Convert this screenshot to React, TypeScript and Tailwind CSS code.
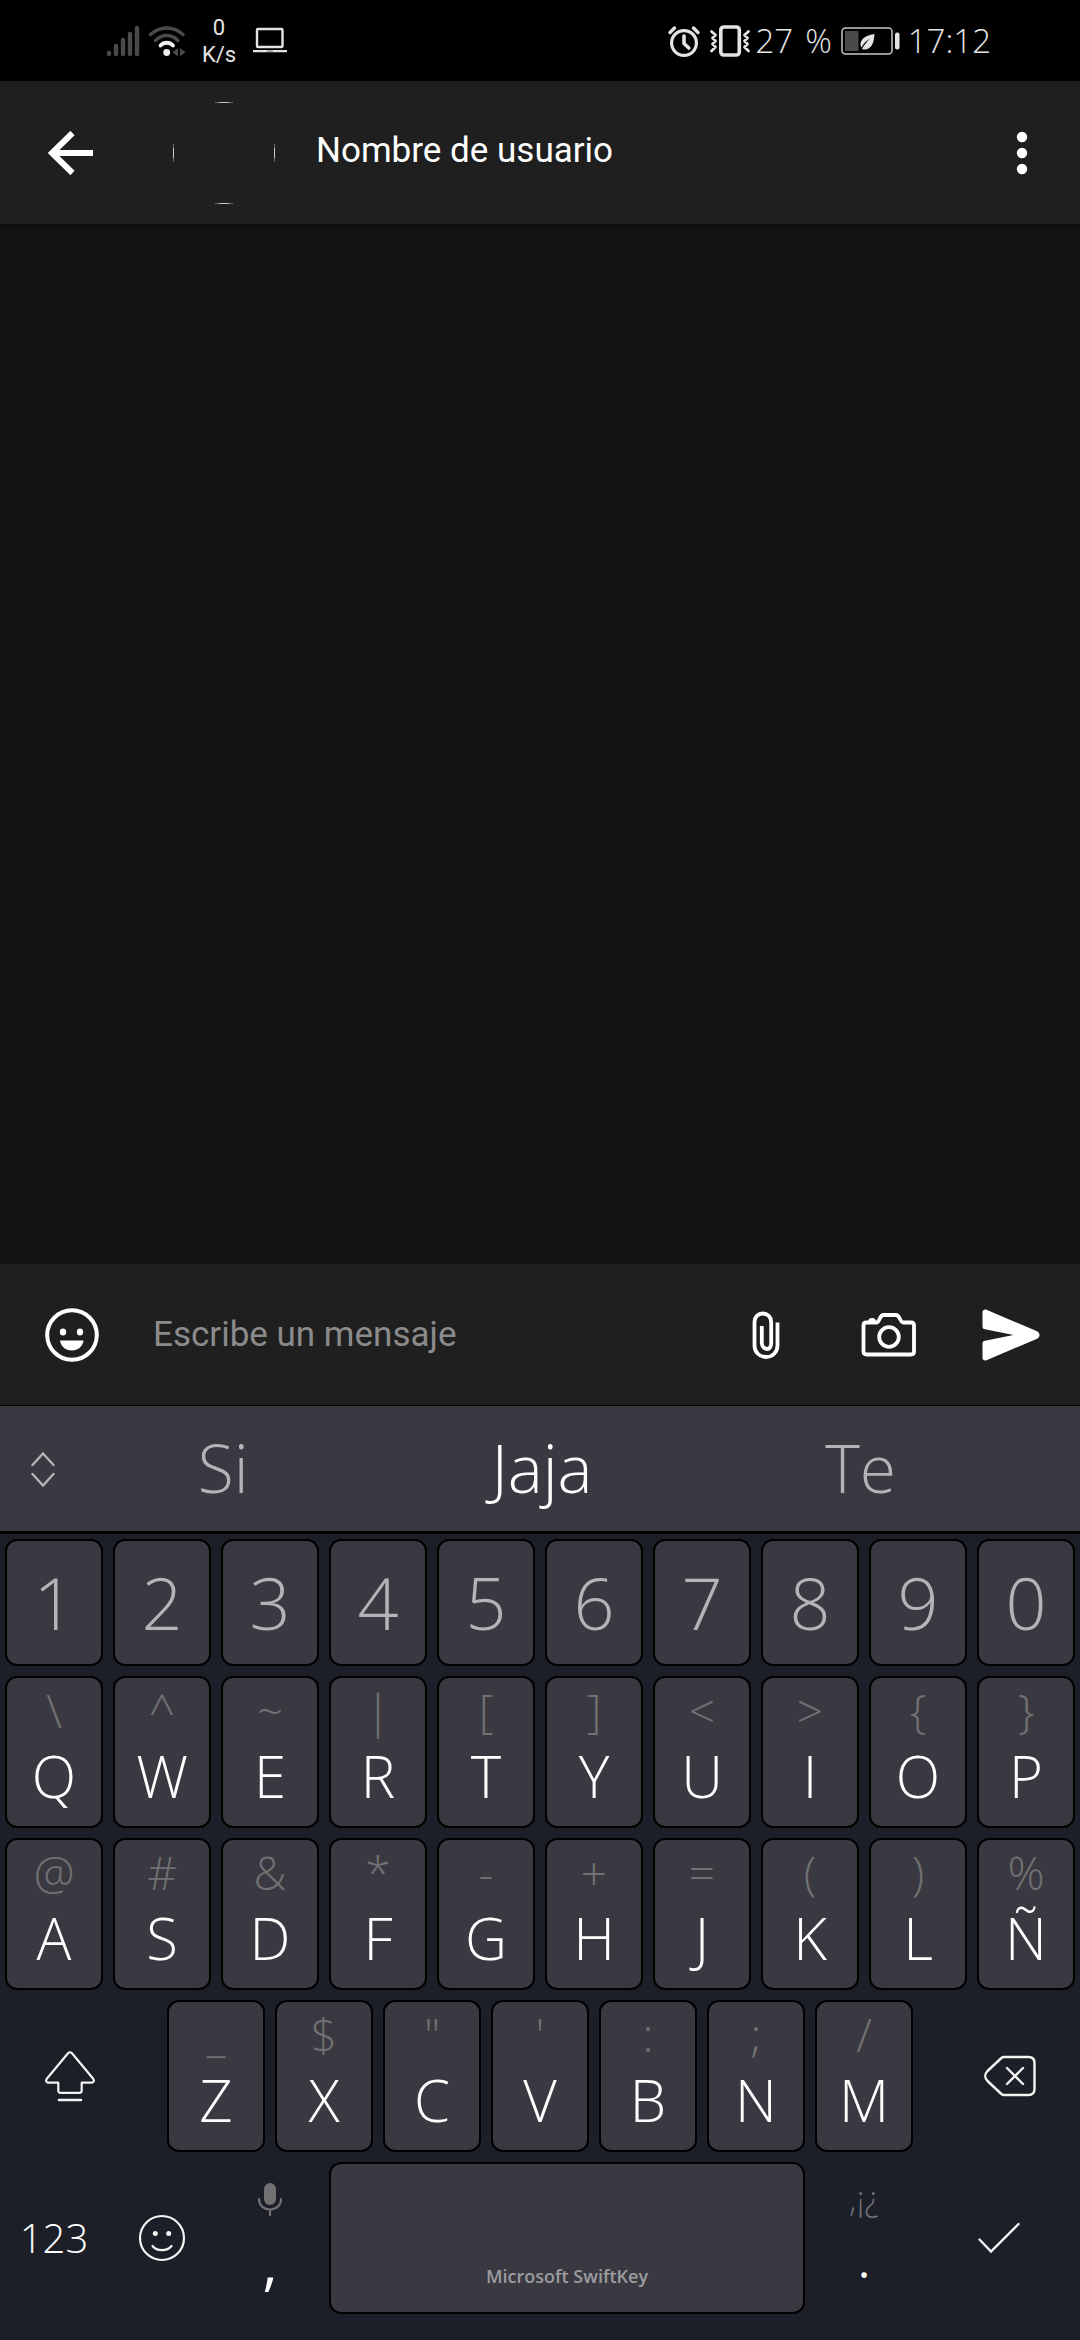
import React from "react";

type KeyDef = { main: string; hint: string };

const digits = ["1", "2", "3", "4", "5", "6", "7", "8", "9", "0"];

const zip = (letters: string, hints: string): KeyDef[] =>
  Array.from(letters).map((main, i) => ({ main, hint: Array.from(hints)[i] }));

const topRow = zip("QWERTYUIOP", "\\^~|[]<>{}");
const homeRow = zip("ASDFGHJKLÑ", "@#&*-+=()%");
const bottomRow = zip("ZXCVBNM", "_$\"':;/");

const capClass = "mx-[5px] rounded-xl border-2 border-black bg-[#3a3942]";

function LetterKey({ main, hint }: KeyDef) {
  return (
    <button className={`${capClass} col-span-2 flex h-[152px] flex-col items-center overflow-hidden pt-1`}>
      <span className="text-[46px] leading-[56px] text-[#717174]">{hint}</span>
      <span className="text-[58px] font-[350] leading-[76px] text-white">{main}</span>
    </button>
  );
}

function StatusBar() {
  return (
    <div className="flex h-[81px] items-center bg-black pl-[106px] pr-[89px] text-[#e4e4e4]">
      <svg className="h-8 w-[34px]" viewBox="0 0 34 32" stroke="#4a4a4a" strokeWidth="4.4" strokeLinecap="round">
        <path d="M3 28v1M10 21v8M17 15v14M24 9v20M31 3v26" />
      </svg>
      <svg className="ml-2 h-8 w-[38px]" viewBox="0 0 38 32" fill="none" strokeLinecap="round">
        <path d="M2.500 9.500C12 .8 25.500 .8 35 9.500" stroke="#4a4a4a" strokeWidth="3.400" />
        <path d="M7.500 15.500C14 8.800 23.500 8.800 30 15.500" stroke="#4a4a4a" strokeWidth="3.400" />
        <path d="M12.500 20.500C16 16.800 21.500 16.800 25 20.500" stroke="#efefef" strokeWidth="3.800" />
        <circle cx="18.700" cy="27.500" r="3.400" fill="#efefef" />
        <path d="M30 23v8.500L24.500 27.200zM32 23v8.500l5.500-4.300z" fill="#4a4a4a" />
      </svg>
      <div className="ml-3 flex w-[42px] flex-col text-center font-['Roboto'] text-[22px] font-normal leading-[27px]">
        <span>0</span>
        <span>K/s</span>
      </div>
      <svg className="ml-3 h-7 w-9" viewBox="0 0 36 28" fill="none">
        <rect x="5" y="2" width="25.500" height="18" rx="1" stroke="#e4e4e4" strokeWidth="2.400" />
        <path d="M1 23h34v2.200H1z" fill="#e4e4e4" />
        <path d="M15 24h6" stroke="#777" strokeWidth="1" />
      </svg>
      <div className="ml-auto flex items-center">
        <svg className="h-8 w-[32px]" viewBox="0 0 32 32" fill="none" stroke="#e4e4e4">
          <circle cx="16" cy="18" r="12.400" strokeWidth="3.200" />
          <path d="M16 11v7.500l4.800 4.500" strokeWidth="3.600" strokeLinecap="round" strokeLinejoin="round" />
          <path d="M2 7.500l4.500-4.500M30 7.500L25.500 3" strokeWidth="3.200" strokeLinecap="round" />
        </svg>
        <svg className="ml-[9px] h-8 w-[42px]" viewBox="0 0 42 32" fill="none" stroke="#e4e4e4">
          <rect x="11.800" y="2" width="18.500" height="28" rx="3" strokeWidth="3.600" />
          <path d="M2.500 6.500l4 3.500-3 3 3 3-3 3 3 3-4 4M39.500 6.500l-4 3.500 3 3-3 3 3 3-3 3 4 4" strokeWidth="2.800" strokeLinecap="round" strokeLinejoin="round" />
        </svg>
        <div className="ml-[4px] flex gap-[12px] text-[33px] leading-[40px]">
          <span>27</span>
          <span>%</span>
        </div>
        <svg className="ml-[9px] h-[30px] w-[60px]" viewBox="0 0 60 30" fill="none">
          <rect x="1" y="2" width="50" height="26" rx="3.500" stroke="#c8c8c8" strokeWidth="1.500" />
          <rect x="4" y="5" width="13.500" height="20" rx="1" fill="#4a4a4a" />
          <rect x="54" y="6.500" width="4.500" height="17" rx="2" fill="#e4e4e4" />
          <path d="M33.500 8C26 9 20 12 19.500 18c0 1.500.3 2.500 1 3.500 2-4 5-7 8.500-9-3 3-6 6.500-8 10.500 4 1.500 8-.5 10-4 2-3.500 2-7 2.500-11z" fill="#e4e4e4" />
        </svg>
        <span className="ml-[7px] text-[33px] leading-[40px]">17:12</span>
      </div>
    </div>
  );
}

function ChatHeader() {
  return (
    <header className="flex h-[143px] items-center bg-[#1f1f1f] pl-[48px] pr-[46px]">
      <button aria-label="Atrás">
        <svg className="h-11 w-[46px]" viewBox="0 0 46 44" fill="none" stroke="#fff" strokeWidth="6">
          <path d="M24.500 2L4 22l20.500 20M4 22h41" />
        </svg>
      </button>
      <svg className="ml-[78px] size-[104px]" viewBox="0 0 104 104" strokeWidth="1" fill="none">
        <path d="M43 1.500h18M43 102.500h18M1.500 43v18M102.500 43v18" stroke="#6a6a6a" />
        <path d="M47 1.500h10M47 102.500h10M1.500 47v10M102.500 47v10" stroke="#c8c8c8" />
      </svg>
      <h1 className="ml-10 pb-1 font-['Roboto'] text-[35px] font-normal leading-[40px] text-white">Nombre de usuario</h1>
      <button aria-label="Más opciones" className="ml-auto">
        <svg className="h-11 w-6" viewBox="0 0 24 44" fill="#fff">
          <circle cx="12" cy="6" r="5.200" />
          <circle cx="12" cy="22" r="5.200" />
          <circle cx="12" cy="38" r="5.200" />
        </svg>
      </button>
    </header>
  );
}

function Composer() {
  return (
    <div className="flex h-[141px] items-center bg-[#1f1f1f] pl-[44px] pr-[40px]">
      <button aria-label="Emojis">
        <svg className="size-14" viewBox="0 0 56 56" fill="#fff">
          <circle cx="28" cy="28" r="24.800" fill="none" stroke="#fff" strokeWidth="4" />
          <ellipse cx="19" cy="25" rx="3.200" ry="3.600" />
          <ellipse cx="36" cy="25" rx="3.200" ry="3.600" />
          <path d="M16 33.500h23.500c-.8 6-5.500 10-11.700 10s-11-4-11.800-10z" />
        </svg>
      </button>
      <input
        aria-label="Escribe un mensaje"
        placeholder="Escribe un mensaje"
        className="ml-[53px] min-w-0 flex-1 bg-transparent font-['Roboto'] text-[35px] font-normal leading-[42px] text-white outline-none placeholder:text-[#8b8b8b]"
      />
      <button aria-label="Adjuntar">
        <svg className="h-[50px] w-[30px]" viewBox="0 0 30 50" fill="none" stroke="#fff" strokeWidth="3.800">
          <path d="M26.500 12.500v23c0 6.600-4.900 11.500-11.500 11.500S3.500 42.100 3.500 35.500V12c0-5 3.500-8.500 8.300-8.500S20.200 7 20.200 12v21c0 3.500-1.600 6-4.200 6s-5.200-2.500-5.200-6V16" />
        </svg>
      </button>
      <button aria-label="Cámara" className="ml-[80px]">
        <svg className="h-12 w-[56px]" viewBox="0 0 56 48" fill="none" stroke="#fff" strokeWidth="3.800">
          <path d="M5.500 11.500h10.500c3-1 2.500-7.500 6.500-7.500h12.500c4 0 3.500 6.500 7 7.500h8c2 0 3 1 3 3v26c0 2-1 3-3 3H5.500c-2 0-3-1-3-3v-26c0-2 1-3 3-3" strokeLinejoin="round" />
          <path d="M8 10c0-3 6-3 6 0z" fill="#fff" strokeWidth="1.500" />
          <circle cx="28" cy="26" r="9.800" />
        </svg>
      </button>
      <button aria-label="Enviar" className="ml-[65px]">
        <svg className="h-[54px] w-[58px]" viewBox="0 0 58 54" fill="#fff">
          <path d="M4.500 1.800L54.500 23c4 1.800 4 6.200 0 8L4.500 52.200C2.500 53 .5 52 .5 49.800V35.500c0-1.800.8-2.600 2.500-2.800L31.500 27 3 21.300C1.300 21 .5 20.200.5 18.500V4.200C.5 2 2.500 1 4.500 1.800z" />
        </svg>
      </button>
    </div>
  );
}

function Suggestions() {
  return (
    <div className="flex h-[129px] items-center border-b-[3px] border-t border-black bg-[#3a3942] pl-[28px] pr-[60px]">
      <button aria-label="Expandir">
        <svg className="h-9 w-[30px]" viewBox="0 0 30 36" fill="none" stroke="#b4b3b8" strokeWidth="2.400" strokeLinecap="round">
          <path d="M4.500 14L15 2.500 25.500 14M4.500 23L15 34.500 25.500 23" />
        </svg>
      </button>
      <div className="ml-[6px] grid flex-1 grid-cols-3 pb-1 text-[66px] leading-[90px] text-[#b4b3b8]">
        <button>Si</button>
        <button className="font-[350] text-white">Jaja</button>
        <button>Te</button>
      </div>
    </div>
  );
}

function Keyboard() {
  return (
    <div className="grid grid-cols-20 gap-y-[10px] bg-[#1d1f28] pb-[26px] pt-[5px] text-white">
      {digits.map((d) => (
        <button key={d} className={`${capClass} col-span-2 flex h-[127px] items-center justify-center pb-0.5 text-[72px] leading-[90px] text-[#b4b3b8]`}>
          {d}
        </button>
      ))}
      {topRow.map((k) => <LetterKey key={k.main} {...k} />)}
      {homeRow.map((k) => <LetterKey key={k.main} {...k} />)}

      <button aria-label="Mayúsculas" className="col-span-3 flex items-center justify-center pr-[22px]">
        <svg className="h-[52px] w-[52px]" viewBox="0 0 52 52" fill="none" stroke="#f4f4f4" strokeWidth="2.200" strokeLinejoin="round" strokeLinecap="round">
          <path d="M24 3.300c1.200-1.400 2.800-1.400 4 0L49 28.500c1.700 2.200.9 4.200-1.700 4.200H37.700v7.800c0 1.700-.7 2.400-2.400 2.400H16.700c-1.700 0-2.400-.7-2.400-2.400v-7.800H4.700c-2.600 0-3.400-2-1.700-4.200z" />
          <path d="M15 50h22" strokeWidth="2.600" />
        </svg>
      </button>
      {bottomRow.map((k) => <LetterKey key={k.main} {...k} />)}
      <button aria-label="Borrar" className="col-span-3 flex items-center justify-center pl-[22px]">
        <svg className="h-[42px] w-[52px]" viewBox="0 0 52 42" fill="none" stroke="#f4f4f4" strokeWidth="2.400" strokeLinejoin="round" strokeLinecap="round">
          <path d="M20 2h24.500c4 0 6 2 6 6v26c0 4-2 6-6 6H20c-1 0-1.800-.4-2.600-1L3.500 26c-3-3-3-7 0-10L17.400 3c.8-.6 1.600-1 2.600-1z" />
          <path d="M23 13l16 16M39 13L23 29" />
        </svg>
      </button>

      <button className="col-span-2 h-[152px] text-[40px] font-[350] leading-[56px]">123</button>
      <button aria-label="Emoticonos" className="col-span-2 flex items-center justify-center">
        <svg className="size-12" viewBox="0 0 48 48" fill="none" stroke="#f4f4f4" strokeWidth="2.200" strokeLinecap="round">
          <circle cx="24" cy="24" r="22" />
          <path d="M14.500 32c4.500 5.500 14.500 5.500 19 0" />
          <circle cx="17.300" cy="19.500" r="2.500" fill="#f4f4f4" stroke="none" />
          <circle cx="30.700" cy="19.500" r="2.500" fill="#f4f4f4" stroke="none" />
        </svg>
      </button>
      <button className="col-span-2 flex h-[152px] flex-col items-center justify-between pb-[14px] pt-5">
        <svg className="h-9 w-[26px]" viewBox="0 0 26 36" fill="none" stroke="#717174" strokeWidth="2.200" strokeLinecap="round">
          <rect x="7" y="1" width="12" height="22" rx="6" fill="#717174" stroke="none" />
          <path d="M2 17c0 14 22 14 22 0M13 28v5" />
        </svg>
        <span className="text-[58px] font-normal leading-[76px]">,</span>
      </button>
      <button className={`${capClass} col-span-9 flex h-[152px] flex-col items-center justify-end pb-6`}>
        <span className="text-[18px] font-semibold leading-6 text-[#9c9b9f]">Microsoft SwiftKey</span>
      </button>
      <button className="col-span-2 flex h-[152px] flex-col items-center justify-between pb-[26px] pt-[14px]">
        <span className="text-[34px] leading-[44px] text-[#717174]">,¡¿</span>
        <span className="text-[46px] font-normal leading-[56px]">.</span>
      </button>
      <button aria-label="Intro" className="col-span-3 flex items-center justify-center">
        <svg className="h-8 w-11" viewBox="0 0 44 32" fill="none" stroke="#f4f4f4" strokeWidth="2.400" strokeLinecap="round">
          <path d="M2.500 17.500l11.500 12L41.500 2" />
        </svg>
      </button>
    </div>
  );
}

export default function App() {
  return (
    <div className="flex min-h-screen flex-col bg-[#121212] font-['Open_Sans',sans-serif] font-light">
      <StatusBar />
      <ChatHeader />
      <main className="h-px flex-1 border-t-2 border-[#0e0e0e]" />
      <Composer />
      <Suggestions />
      <Keyboard />
    </div>
  );
}
